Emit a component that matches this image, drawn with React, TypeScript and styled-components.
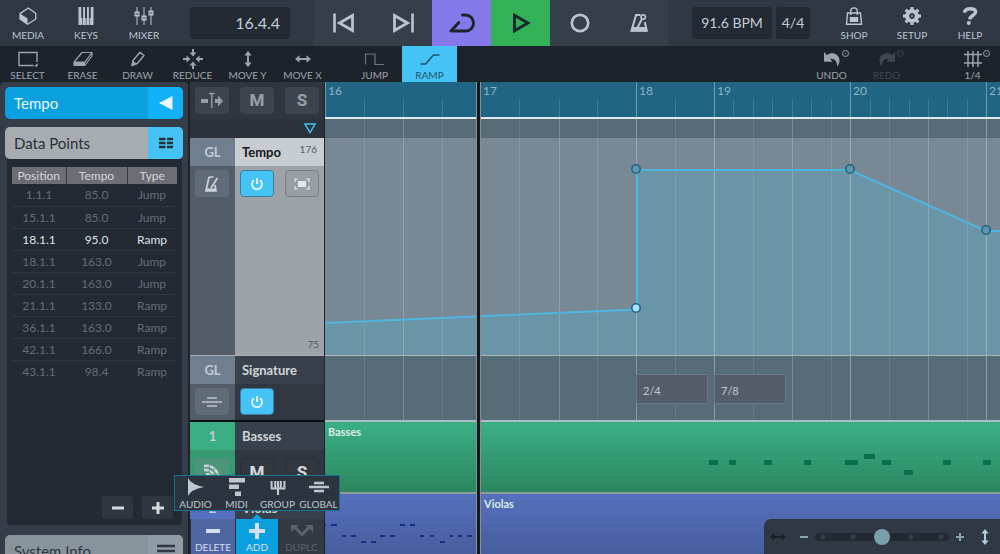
import React, { useState } from "react";
import styled, { createGlobalStyle, css } from "styled-components";

const GlobalStyle = createGlobalStyle`
  *, *::before, *::after { box-sizing: border-box; }
  body { margin: 0; background: #1d232b; font-family: Lato, "Open Sans", sans-serif; }
  button { font: inherit; color: inherit; border: 0; padding: 0; margin: 0; background: none; cursor: pointer; }
  svg { display: block; flex: none; }
`;

/* ---------- shell ---------- */

const Shell = styled.div`
  display: flex;
  flex-direction: column;
  height: 100vh;
  min-width: 1000px;
  overflow: hidden;
  color: #b8c5d0;
`;

const Header = styled.header`
  display: flex;
  flex: none;
  justify-content: space-between;
  height: 46px;
  background: #303843;
`;

const HeaderGroup = styled.div<{ $gap: number }>`
  display: flex;
  align-items: center;
  gap: ${(p) => p.$gap}px;
`;

const ButtonRow = styled.div`
  display: flex;
  align-self: stretch;
`;

const HeaderButton = styled.button`
  display: flex;
  flex-direction: column;
  align-items: center;
  justify-content: space-between;
  width: 58px;
  padding: 7px 2px 5px 0;
  font-size: 10px;
  line-height: 12px;
`;

const Readout = styled.output<{ $width: number; $align?: string }>`
  width: ${(p) => p.$width}px;
  height: 32px;
  padding: 0 ${(p) => (p.$align === "right" ? 10 : 0)}px;
  border-radius: 3px;
  background: #232a33;
  color: #c0ccd6;
  font-size: ${(p) => (p.$align === "right" ? 16 : 14)}px;
  line-height: 31px;
  text-align: ${(p) => p.$align ?? "center"};
`;

const ReadoutPair = styled.div`
  display: flex;
  gap: 4px;
`;

const Transport = styled.div`
  display: flex;
  background: #353f49;
`;

const TransportButton = styled.button<{ $tone?: string }>`
  display: grid;
  place-items: center;
  width: 59px;
  background: ${(p) => p.$tone ?? "transparent"};
  color: ${(p) => (p.$tone ? "#1e242c" : "#b8c5d0")};
`;

/* ---------- tool bar ---------- */

const ToolBar = styled.div`
  display: flex;
  flex: none;
  gap: 17px;
  height: 36px;
  background: #1d232b;
  color: #9da3ab;
`;

const ToolGroup = styled.div<{ $push?: boolean; $gap?: number }>`
  display: flex;
  gap: ${(p) => p.$gap ?? 0}px;
  margin-left: ${(p) => (p.$push ? "auto" : "0")};
`;

const ToolButton = styled.button<{ $on?: boolean }>`
  position: relative;
  display: grid;
  grid-template-rows: 20px 12px;
  place-items: center;
  align-content: start;
  width: 55px;
  padding-top: 3px;
  font-size: 10px;
  line-height: 12px;
  white-space: nowrap;
  ${(p) => p.$on && css`background: #45c3f6; color: #1c536c;`}
  &:disabled { color: #40464e; }
`;

const HistoryDot = styled.span`
  position: absolute;
  top: 4px;
  right: 10px;
  display: grid;
  place-items: center;
  width: 7px;
  height: 7px;
  border: 1px solid currentColor;
  border-radius: 50%;
  &::after { content: ""; width: 1px; height: 1px; background: currentColor; }
`;

/* ---------- body ---------- */

const Body = styled.main`
  display: flex;
  flex: 1;
  min-height: 0;
`;

const Inspector = styled.aside`
  display: flex;
  flex: none;
  flex-direction: column;
  width: 188px;
  padding: 5px 5px 0;
  background: #343d48;
  border-radius: 4px 4px 0 0;
`;

const tones = {
  blue: { base: "#0aa0e0", side: "#10b1f6", text: "#eaf7ff" },
  grey: { base: "#a7acb0", side: "#45c3f6", text: "#2a3038" },
  slate: { base: "#87949c", side: "#8f9ca5", text: "#2f3740" },
};

const SectionButton = styled.button<{ $tone: keyof typeof tones }>`
  display: flex;
  flex: none;
  width: 178px;
  height: 32px;
  overflow: hidden;
  border-radius: 5px;
  background: ${(p) => tones[p.$tone].base};
  color: ${(p) => tones[p.$tone].text};
  font-size: 15px;
  line-height: 32px;
  text-align: left;
`;

const SectionTitle = styled.span`
  flex: 1;
  padding-left: 9px;
`;

const SectionSide = styled.span<{ $tone: keyof typeof tones }>`
  display: grid;
  place-items: center;
  width: 35px;
  background: ${(p) => tones[p.$tone].side};
`;

const Stack = styled.div`
  display: flex;
  flex-direction: column;
  gap: 8px;
`;

const PointPanel = styled.section`
  display: flex;
  flex: 1;
  flex-direction: column;
  justify-content: space-between;
  margin: 0 1px 10px 2px;
  padding: 8px 5px 6px;
  border-radius: 0 0 4px 4px;
  background: #232a33;
`;

const PointTable = styled.table`
  width: 165px;
  border-collapse: collapse;
  table-layout: fixed;
  color: #656c75;
  font-size: 12px;
  line-height: 21px;
  text-align: center;

  th {
    height: 17px;
    padding: 0;
    border-right: 1px solid #343a43;
    background: #6b6f75;
    color: #d2d5d8;
    font-weight: 400;
    line-height: 16px;
  }
  th:last-child { border-right: 0; }
  td { height: 22px; padding: 0; }
  tbody tr + tr { border-top: 1px solid #2f363f; }
`;

const PointRow = styled.tr<{ $active: boolean }>`
  color: ${(p) => (p.$active ? "#dfe3e6" : "inherit")};
`;

const PanelActions = styled.div`
  display: flex;
  justify-content: flex-end;
  gap: 9px;
  padding-right: 4px;
`;

const SquareButton = styled.button`
  display: grid;
  place-items: center;
  width: 31px;
  height: 23px;
  border-radius: 3px;
  background: #303640;
  color: #d5d9dc;
`;

const SystemInfo = styled.div`
  height: 19px;
  overflow: hidden;
`;

/* ---------- track list ---------- */

const TrackColumn = styled.section`
  position: relative;
  display: flex;
  flex: none;
  flex-direction: column;
  width: 134px;
  margin: 0 1px 0 2px;
  background: #2b323b;
`;

const TrackTools = styled.div`
  display: flex;
  flex: none;
  gap: 11px;
  height: 37px;
  padding: 5px;
  background: #303640;
`;

const PadButton = styled.button<{ $tone?: "on" | "light" | "slate" | "clear" }>`
  display: grid;
  flex: none;
  place-items: center;
  width: 34px;
  height: 27px;
  border-radius: 4px;
  background: #3d444e;
  color: #979da5;
  font: 800 17px/27px Roboto, "Liberation Sans", sans-serif;
  ${(p) => p.$tone === "on" && css`background: #45c3f6; color: #e8f8ff; border: 1px solid #3a7fa0;`}
  ${(p) => p.$tone === "light" && css`background: #999ea4; color: #e4e7ea; border: 1px solid #7b8087;`}
  ${(p) => p.$tone === "slate" && css`background: rgba(130, 142, 156, 0.28); color: #ccd2d8;`}
  ${(p) => p.$tone === "clear" && css`background: #30373f; color: #d3d7db; border: 1px solid #29303a;`}
`;

const MarkerRow = styled.div`
  display: flex;
  flex: none;
  justify-content: flex-end;
  height: 19px;
  padding: 4px 8px;
  background: #2b323b;
`;

const Tracks = styled.div`
  flex: 1;
  min-height: 0;
  overflow: hidden;
`;

const TrackItem = styled.article<{ $height: number; $edge: string }>`
  display: grid;
  grid-template: 28px 1fr / 45px 1fr;
  height: ${(p) => p.$height}px;
  border-bottom: ${(p) => p.$edge};
`;

const TrackTag = styled.div<{ $tone: string }>`
  background: ${(p) => p.$tone};
  color: #c3cbd3;
  font-size: 13px;
  font-weight: 700;
  line-height: 28px;
  text-align: center;
`;

const TrackName = styled.div<{ $selected?: boolean }>`
  display: flex;
  justify-content: space-between;
  padding: 0 7px 0 7px;
  background: ${(p) => (p.$selected ? "#c8cdd1" : "#38404b")};
  color: ${(p) => (p.$selected ? "#14181d" : "#d0d5d9")};
  font-size: 13px;
  font-weight: 700;
  line-height: 28px;
`;

const RangeMark = styled.span`
  color: #565b62;
  font-size: 10px;
  font-weight: 400;
  line-height: 22px;
`;

const TrackSide = styled.div<{ $tone: string; $inset?: number }>`
  padding: ${(p) => p.$inset ?? 4}px 5px 0;
  background: ${(p) => p.$tone};
`;

const TrackControls = styled.div<{ $tone: string; $inset?: number }>`
  display: flex;
  flex-direction: column;
  align-items: flex-end;
  justify-content: space-between;
  padding: ${(p) => p.$inset ?? 4}px 5px 0;
  background: ${(p) => p.$tone};
`;

const PadPair = styled.div`
  display: flex;
  gap: 11px;
  width: 79px;
`;

const ActionBar = styled.div`
  position: relative;
  display: grid;
  flex: none;
  grid-template-columns: 45px 43px 1fr;
  height: 35px;
  background: #343a42;
`;

const ActionButton = styled.button<{ $tone?: string }>`
  display: flex;
  flex-direction: column;
  align-items: center;
  justify-content: space-between;
  padding: 4px 0 1px;
  border-left: 1px solid #2a3038;
  background: ${(p) => p.$tone ?? "transparent"};
  color: #d5dff0;
  font-size: 10px;
  line-height: 12px;
  &:disabled { color: #5c636c; }
`;

const AddMenu = styled.div`
  position: absolute;
  z-index: 3;
  bottom: 43px;
  left: -16px;
  display: flex;
  width: 166px;
  height: 36px;
  border: 1px solid #14708f;
  background: #2c353f;
  &::after {
    content: "";
    position: absolute;
    top: 38px;
    left: 77px;
    border: 5px solid transparent;
    border-top: 0;
    border-bottom-color: #0aa0e0;
  }
`;

const AddMenuItem = styled.button`
  display: flex;
  flex: none;
  flex-direction: column;
  align-items: center;
  justify-content: space-between;
  width: 41px;
  padding: 2px 0 0;
  color: #bfc6cd;
  font-size: 10px;
  line-height: 12px;
`;

/* ---------- timeline ---------- */

const Timeline = styled.section`
  position: relative;
  display: flex;
  flex: 1;
  flex-direction: column;
  min-width: 0;
  overflow: hidden;
  background: #566c79;
`;

const Ruler = styled.div`
  position: relative;
  flex: none;
  height: 37px;
  border-bottom: 2px solid #dfe9ee;
  background: #206584;
`;

const BarMark = styled.span<{ $minor: boolean }>`
  position: absolute;
  bottom: 0;
  height: ${(p) => (p.$minor ? "18px" : "100%")};
  padding: 1px 0 0 2px;
  border-left: 1px solid rgba(190, 215, 225, ${(p) => (p.$minor ? 0.2 : 0.5)});
  color: #92b4c3;
  font-size: 12px;
  line-height: 15px;
`;

const Lane = styled.div<{ $height: number; $tone?: string; $edge?: string }>`
  position: relative;
  flex: none;
  height: ${(p) => p.$height}px;
  border-bottom: ${(p) => p.$edge ?? "0"};
  background: ${(p) => p.$tone ?? "transparent"};
`;

const GridLine = styled.i<{ $level: number }>`
  position: absolute;
  top: 0;
  bottom: 0;
  width: 1px;
  background: rgba(200, 220, 228, ${(p) => [0.14, 0.28, 0.42][p.$level]});
`;

const Curve = styled.svg`
  position: absolute;
  inset: 0;
`;

const MeterEvent = styled.button`
  position: absolute;
  top: 18px;
  width: 72px;
  height: 30px;
  padding: 2px 0 0 6px;
  border: 1px solid #6a7783;
  background: #545e6a;
  color: #c3c9ce;
  font-size: 11px;
  text-align: left;
`;

const Clip = styled.div<{ $tone: string }>`
  position: absolute;
  top: 0;
  bottom: 0;
  right: 0;
  padding: 2px 3px;
  background: ${(p) => p.$tone};
  color: #d9f0e8;
  font-size: 11px;
  font-weight: 700;
  line-height: 15px;
`;

const Note = styled.i<{ $tone: string; $tall: number }>`
  position: absolute;
  height: ${(p) => p.$tall}px;
  background: ${(p) => p.$tone};
`;

const Playhead = styled.div`
  position: absolute;
  top: 0;
  bottom: 0;
  left: 151px;
  width: 5px;
  border: solid rgba(215, 220, 222, 0.6);
  border-width: 0 1px;
  background: #161a1f;
`;

const ZoomBar = styled.div`
  position: absolute;
  right: 0;
  bottom: 0;
  display: flex;
  align-items: center;
  gap: 14px;
  width: 236px;
  height: 35px;
  padding: 0 11px 0 6px;
  border-top-left-radius: 7px;
  background: #2f3944;
  color: #86a4b0;
`;

const ZoomRange = styled.div`
  display: flex;
  flex: 1;
  align-items: center;
  gap: 7px;
`;

const ZoomIcon = styled.button<{ $tone?: string }>`
  display: grid;
  place-items: center;
  height: 24px;
  color: ${(p) => p.$tone ?? "inherit"};
`;

const ZoomSlider = styled.input`
  appearance: none;
  width: 134px;
  height: 16px;
  margin: 0;
  background:
    radial-gradient(circle at 8px 8px, #353e49 2px, transparent 3px),
    radial-gradient(circle at 38px 8px, #353e49 2px, transparent 3px),
    radial-gradient(circle at 96px 8px, #353e49 2px, transparent 3px),
    radial-gradient(circle at 126px 8px, #353e49 2px, transparent 3px),
    linear-gradient(#222932, #222932) 4px 4px / 126px 8px no-repeat,
    radial-gradient(circle at 4px 8px, #222932 4px, transparent 4px),
    radial-gradient(circle at 130px 8px, #222932 4px, transparent 4px);
  &::-webkit-slider-thumb {
    appearance: none;
    width: 16px;
    height: 16px;
    border-radius: 50%;
    background: #7ba0aa;
  }
`;

/* ---------- icons ---------- */

type IconProps = { w: number; h: number; children: React.ReactNode };
const Icon = ({ w, h, children }: IconProps) => (
  <svg width={w} height={h} viewBox={`0 0 ${w} ${h}`} fill="currentColor" aria-hidden="true">
    {children}
  </svg>
);
const line = (width: number) => ({ fill: "none", stroke: "currentColor", strokeWidth: width });

const MediaIcon = () => (
  <Icon w={18} h={18}>
    <path d="M9.3 1 16.8 6.6V12L8.5 17.2 1 12V6.6Z" {...line(1.3)} strokeLinejoin="round" />
    <path d="M1 6.6 8.5 11.6V17.2L1 12Z" />
  </Icon>
);
const KeysIcon = () => (
  <Icon w={16} h={18}>
    <path d="M.5 0H3.3V11H4.1V18H.5ZM5.6 0H6.8V11H7.8V18H4.7V11H5.6ZM9.2 0H10.4V11H11.3V18H8.4V11H9.2ZM12.7 0H15.5V18H11.9V11H12.7Z" />
    <path d="M5.2 0H7V18H5.2ZM9 0H10.8V18H9Z" />
  </Icon>
);
const MixerIcon = () => (
  <Icon w={20} h={18}>
    <path d="M3 0V18M10 0V18M17 0V18" {...line(1)} />
    <path d="M.5 4.5H5.5V9.5H.5ZM7.5 8.5H12.5V13.5H7.5ZM14.5 3.5H19.5V8.5H14.5Z" />
    <path d="M1.5 7H4.5M8.5 11H11.5M15.5 6H18.5" fill="none" stroke="#303843" strokeWidth="1" />
  </Icon>
);
const ShopIcon = () => (
  <Icon w={18} h={18}>
    <path d="M2.5 6H15.5L16.5 17.3H1.5Z" {...line(1.4)} />
    <path d="M5.7 8V4.2a3.3 3.3 0 0 1 6.6 0V8" {...line(1.4)} />
    <path d="M4.8 10H13.2V15H4.8Z" />
  </Icon>
);
const SetupIcon = () => (
  <Icon w={20} h={18}>
    <g transform="translate(10 9)">
      {[0, 45, 90, 135, 180, 225, 270, 315].map((a) => (
        <path key={a} d="M-1.9 -5.5 L-1.4 -9H1.4L1.9 -5.5Z" transform={`rotate(${a})`} />
      ))}
      <circle r="4.8" {...line(3.8)} />
      <circle r="1.3" opacity="0.5" />
    </g>
  </Icon>
);
const HelpIcon = () => (
  <Icon w={16} h={18}>
    <path d="M2.3 5.6C3 2.9 5.2 1.8 8.2 1.8c3.4 0 5.4 1.2 5.4 3.3 0 3.2-5.4 3-5.8 7.2" {...line(3.5)} />
    <circle cx="6.8" cy="16" r="2" />
  </Icon>
);

const PrevIcon = () => (
  <Icon w={22} h={20}>
    <path d="M1.5 0.5V19.5" {...line(2.6)} />
    <path d="M19.5 2.5V17.5L6.5 10Z" {...line(2.8)} />
  </Icon>
);
const NextIcon = () => (
  <Icon w={22} h={20}>
    <path d="M20.5 0.5V19.5" {...line(2.6)} />
    <path d="M2.5 2.5V17.5L15.5 10Z" {...line(2.8)} />
  </Icon>
);
const CycleIcon = () => (
  <Icon w={28} h={22}>
    <path d="M14.5 3H17.5a8 8 0 0 1 0 16H3L10.8 10.5" {...line(2.9)} strokeLinecap="round" strokeLinejoin="round" />
  </Icon>
);
const PlayIcon = () => (
  <Icon w={20} h={20}>
    <path d="M3.5 2.2V17.8L17 10Z" {...line(2.8)} />
  </Icon>
);
const RecordIcon = () => (
  <Icon w={20} h={20}>
    <circle cx="10" cy="10" r="8.2" {...line(2.7)} />
  </Icon>
);
const ClickIcon = () => (
  <Icon w={20} h={20}>
    <path d="M11.5 2H7L2.5 17.8H17.8L15.8 9" {...line(2)} />
    <path d="M3 14H17.5V18.5H2Z" />
    <path d="M8.5 14.5 13 6" {...line(2)} />
    <circle cx="14.2" cy="4" r="2.2" {...line(1.7)} />
  </Icon>
);

const SelectIcon = () => (
  <Icon w={20} h={16}>
    <path d="M15.5 14.5H1V1.5H19V11" {...line(1.4)} />
    <path d="M19.7 12V15.5H16Z" />
  </Icon>
);
const EraseIcon = () => (
  <Icon w={20} h={16}>
    <path d="M1 11.2 9 1.5H19L12 11.2ZM1 11.2V14.5H11.8L19 5V1.5" {...line(1.2)} strokeLinejoin="round" />
    <path d="M1 11H12V14.5H1Z" />
  </Icon>
);
const DrawIcon = () => (
  <Icon w={16} h={16}>
    <path d="M2 14.5 3 9.5 10 1.3 14 4.5 7 12.7Z" {...line(1.4)} strokeLinejoin="round" />
    <path d="M1.3 15.3 2.5 9.5 7.2 13Z" />
  </Icon>
);
const ReduceIcon = () => (
  <Icon w={20} h={20}>
    <g transform="translate(10 10)">
      {[0, 90, 180, 270].map((a) => (
        <path key={a} d="M-1-10H1V-6.5H3.5L0-2.5-3.5-6.5H-1Z" transform={`rotate(${a})`} />
      ))}
    </g>
  </Icon>
);
const arrowV = "M4 0 7.7 4.5H5V11.5H7.7L4 16 .3 11.5H3V4.5H.3Z";
const MoveYIcon = () => (
  <Icon w={8} h={16}>
    <path d={arrowV} />
  </Icon>
);
const MoveXIcon = () => (
  <Icon w={16} h={16}>
    <path d={arrowV} transform="translate(16 4) rotate(90)" />
  </Icon>
);
const JumpIcon = () => (
  <Icon w={20} h={16}>
    <path d="M.5 13.5V3H10V13.5H19" {...line(1.2)} opacity="0.65" />
  </Icon>
);
const RampIcon = () => (
  <Icon w={20} h={16}>
    <path d="M.5 13H5.5L13.5 4H19.5" {...line(1.6)} />
  </Icon>
);
const undoPath = "M1 1 4 4.2C8.5.2 16.5 2.8 16.5 9.5 16.5 12 15.5 14 14 15.5 14.5 10 11 7 7 7.8L9.5 10.8H1Z";
const UndoIcon = () => (
  <Icon w={18} h={16}>
    <path d={undoPath} />
  </Icon>
);
const RedoIcon = () => (
  <Icon w={18} h={16}>
    <path d={undoPath} transform="matrix(-1 0 0 1 18 0)" />
  </Icon>
);
const GridIcon = () => (
  <Icon w={18} h={16}>
    <path d="M4 0V16M9 0V16M14 0V16M0 3.5H18M0 12H18" {...line(1.5)} />
  </Icon>
);

const SkipIcon = () => (
  <Icon w={22} h={18}>
    <path d="M0 7H7V11H0ZM14 7H17V3.5L22 9 17 14.5V11H14Z" />
    <path d="M8 1.5H13.5M10.8 1.5V16" {...line(1.4)} />
  </Icon>
);
const MetronomeIcon = () => (
  <Icon w={16} h={18}>
    <path d="M5 2H9.5M5 2 2 16H12L11 10M7 13 13.5 3" {...line(1.7)} />
    <path d="M2.4 13.5H11.6V16H2Z" />
  </Icon>
);
const PowerIcon = () => (
  <Icon w={14} h={14}>
    <path d="M4 3.2a5 5 0 1 0 6 0M7 1V7" {...line(1.8)} />
  </Icon>
);
const FitIcon = () => (
  <Icon w={16} h={14}>
    <path d="M4 4H12V10H4Z" />
    <path d="M1 5V2H4M12 2H15V5M15 9V12H12M4 12H1V9" {...line(1.2)} />
  </Icon>
);
const GlobalIcon = ({ muted }: { muted?: boolean }) => (
  <Icon w={20} h={18}>
    <path d="M5 5H15M0 9H20M5 13H15" {...line(muted ? 2 : 2.5)} opacity={muted ? 0.65 : 1} />
  </Icon>
);
const InstrumentIcon = () => (
  <Icon w={20} h={20}>
    <path d="M2 4Q14 2 18.5 19M2 8Q11 7 14 18M4 12Q9 12 10 17" {...line(2.6)} strokeDasharray="5 0.8" />
  </Icon>
);
const AudioIcon = () => (
  <Icon w={16} h={18}>
    <path d="M0 0Q3 6.5 16 9 3 11.5 0 18Z" />
  </Icon>
);
const MidiIcon = () => (
  <Icon w={16} h={18}>
    <path d="M0 0H16V4.5H0ZM0 6.5H10V11H0ZM6 13.5H12V18H6Z" />
  </Icon>
);
const GroupIcon = () => (
  <Icon w={16} h={18}>
    <path d="M1.6 3V10.5H14.4V3M8 3V17M5.2 3V10M10.8 3V10" {...line(2.1)} />
  </Icon>
);
const MinusIcon = () => (
  <Icon w={14} h={16}>
    <path d="M0 8H14" {...line(4)} />
  </Icon>
);
const PlusIcon = ({ size }: { size: number }) => (
  <Icon w={size} h={size}>
    <path d={`M0 ${size / 2}H${size}M${size / 2} 0V${size}`} {...line(size / 4)} />
  </Icon>
);
const DuplicateIcon = () => (
  <Icon w={22} h={16}>
    <path d="M4 4.5 11 11.5 18 4.5" {...line(3)} />
    <path d="M0 2H8L0 9ZM22 2H14L22 9Z" />
  </Icon>
);
const ListIcon = () => (
  <Icon w={14} h={12}>
    <path d="M0 2H6.5M0 6H6.5M0 10H6.5M8 2H14M8 6H14M8 10H14" {...line(2.4)} />
  </Icon>
);
const MenuIcon = () => (
  <Icon w={18} h={14}>
    <path d="M0 2H18M0 7H18M0 12H18" {...line(2.6)} />
  </Icon>
);
const BackIcon = () => (
  <Icon w={14} h={14}>
    <path d="M13.5 0V14L0 7Z" />
  </Icon>
);
const MarkerIcon = () => (
  <Icon w={12} h={11}>
    <path d="M1 1H11L6 9.5Z" fill="none" stroke="#45c3f6" strokeWidth="1.4" />
  </Icon>
);

/* ---------- data ---------- */

const points: [string, string, string][] = [
  ["1.1.1", "85.0", "Jump"],
  ["15.1.1", "85.0", "Jump"],
  ["18.1.1", "95.0", "Ramp"],
  ["18.1.1", "163.0", "Jump"],
  ["20.1.1", "163.0", "Jump"],
  ["21.1.1", "133.0", "Ramp"],
  ["36.1.1", "163.0", "Ramp"],
  ["42.1.1", "166.0", "Ramp"],
  ["43.1.1", "98.4", "Ramp"],
];

const bars = [
  { x: 0, label: "16" },
  { x: 155, label: "17" },
  { x: 311, label: "18" },
  { x: 389, label: "19" },
  { x: 525, label: "20" },
  { x: 661, label: "21" },
];
const rulerTicks = [39, 78, 117, 194, 234, 272, 350, 408, 428, 447, 467, 486, 506, 545, 564, 584, 603, 622, 642];
const beats: [number, number][] = [
  [39, 0], [78, 1], [117, 0], [194, 0], [234, 1], [272, 0], [311, 2], [350, 0], [389, 2], [428, 0],
  [467, 1], [506, 0], [525, 2], [564, 0], [603, 1], [642, 0], [661, 2],
];
const bassNotes: [number, number, number][] = [
  [384, 38, 9], [404, 38, 7], [439, 38, 8], [479, 38, 7], [520, 38, 13], [539, 32, 11],
  [557, 38, 9], [579, 48, 9], [618, 38, 8], [658, 38, 8],
];
const violaNotes: [number, number, number][] = [
  [0, 30, 1], [6, 30, 6], [17, 41, 4], [26, 41, 5], [36, 47, 5], [46, 47, 5], [55, 41, 5], [65, 41, 5],
  [75, 30, 5], [85, 30, 5], [95, 41, 4], [105, 41, 4], [115, 47, 5], [125, 41, 3], [133, 41, 4], [142, 41, 5],
];
const nodes: [number, number, boolean][] = [
  [311, 31, false], [525, 31, false], [661, 92, false], [311, 170, true],
];

const GridLines = () => (
  <>
    {beats.map(([x, level]) => (
      <GridLine key={x} $level={level} style={{ left: x }} />
    ))}
  </>
);

export default function App() {
  const [zoom, setZoom] = useState(50);

  return (
    <Shell>
      <GlobalStyle />
      <Header>
        <HeaderGroup $gap={16}>
          <ButtonRow>
            <HeaderButton><MediaIcon />MEDIA</HeaderButton>
            <HeaderButton><KeysIcon />KEYS</HeaderButton>
            <HeaderButton><MixerIcon />MIXER</HeaderButton>
          </ButtonRow>
          <Readout $width={100} $align="right" aria-label="Position">16.4.4</Readout>
        </HeaderGroup>
        <Transport>
          <TransportButton aria-label="Previous"><PrevIcon /></TransportButton>
          <TransportButton aria-label="Next"><NextIcon /></TransportButton>
          <TransportButton aria-label="Cycle" $tone="#8578ea"><CycleIcon /></TransportButton>
          <TransportButton aria-label="Play" $tone="#33b156"><PlayIcon /></TransportButton>
          <TransportButton aria-label="Record"><RecordIcon /></TransportButton>
          <TransportButton aria-label="Click"><ClickIcon /></TransportButton>
        </Transport>
        <HeaderGroup $gap={16}>
          <ReadoutPair>
            <Readout $width={80} aria-label="Tempo">91.6 BPM</Readout>
            <Readout $width={34} aria-label="Time signature">4/4</Readout>
          </ReadoutPair>
          <ButtonRow>
            <HeaderButton><ShopIcon />SHOP</HeaderButton>
            <HeaderButton><SetupIcon />SETUP</HeaderButton>
            <HeaderButton><HelpIcon />HELP</HeaderButton>
          </ButtonRow>
        </HeaderGroup>
      </Header>

      <ToolBar>
        <ToolGroup>
          <ToolButton><SelectIcon />SELECT</ToolButton>
          <ToolButton><EraseIcon />ERASE</ToolButton>
          <ToolButton><DrawIcon />DRAW</ToolButton>
          <ToolButton><ReduceIcon />REDUCE</ToolButton>
          <ToolButton><MoveYIcon />MOVE Y</ToolButton>
          <ToolButton><MoveXIcon />MOVE X</ToolButton>
        </ToolGroup>
        <ToolGroup>
          <ToolButton><JumpIcon />JUMP</ToolButton>
          <ToolButton $on><RampIcon />RAMP</ToolButton>
        </ToolGroup>
        <ToolGroup $push $gap={31}>
          <ButtonRow>
            <ToolButton><UndoIcon />UNDO<HistoryDot /></ToolButton>
            <ToolButton disabled><RedoIcon />REDO<HistoryDot /></ToolButton>
          </ButtonRow>
          <ToolButton><GridIcon />1/4<HistoryDot /></ToolButton>
        </ToolGroup>
      </ToolBar>

      <Body>
        <Inspector>
          <Stack>
            <SectionButton $tone="blue">
              <SectionTitle>Tempo</SectionTitle>
              <SectionSide $tone="blue"><BackIcon /></SectionSide>
            </SectionButton>
            <SectionButton $tone="grey">
              <SectionTitle>Data Points</SectionTitle>
              <SectionSide $tone="grey"><ListIcon /></SectionSide>
            </SectionButton>
          </Stack>
          <PointPanel>
            <PointTable>
              <colgroup>
                <col width="54" />
                <col width="61" />
                <col width="50" />
              </colgroup>
              <thead>
                <tr><th>Position</th><th>Tempo</th><th>Type</th></tr>
              </thead>
              <tbody>
                {points.map(([position, tempo, type], i) => (
                  <PointRow key={i} $active={i === 2}>
                    <td>{position}</td><td>{tempo}</td><td>{type}</td>
                  </PointRow>
                ))}
              </tbody>
            </PointTable>
            <PanelActions>
              <SquareButton aria-label="Remove point"><Icon w={12} h={4}><path d="M0 2H12" {...line(3)} /></Icon></SquareButton>
              <SquareButton aria-label="Add point"><PlusIcon size={12} /></SquareButton>
            </PanelActions>
          </PointPanel>
          <SystemInfo>
            <SectionButton $tone="slate">
              <SectionTitle>System Info</SectionTitle>
              <SectionSide $tone="slate"><MenuIcon /></SectionSide>
            </SectionButton>
          </SystemInfo>
        </Inspector>

        <TrackColumn>
          <TrackTools>
            <PadButton aria-label="Follow playhead"><SkipIcon /></PadButton>
            <PadButton>M</PadButton>
            <PadButton>S</PadButton>
          </TrackTools>
          <MarkerRow><MarkerIcon /></MarkerRow>
          <Tracks>
            <TrackItem $height={218} $edge="1px solid #a9b0b5">
              <TrackTag $tone="#707f8f">GL</TrackTag>
              <TrackName $selected>Tempo<RangeMark>176</RangeMark></TrackName>
              <TrackSide $tone="#535d69">
                <PadButton $tone="slate" aria-label="Metronome"><MetronomeIcon /></PadButton>
              </TrackSide>
              <TrackControls $tone="#9da2a8">
                <PadPair>
                  <PadButton $tone="on" aria-label="Power"><PowerIcon /></PadButton>
                  <PadButton $tone="light" aria-label="Fit"><FitIcon /></PadButton>
                </PadPair>
                <RangeMark>75</RangeMark>
              </TrackControls>
            </TrackItem>
            <TrackItem $height={66} $edge="2px solid #0b0e12">
              <TrackTag $tone="#707f8f">GL</TrackTag>
              <TrackName>Signature</TrackName>
              <TrackSide $tone="#535d69">
                <PadButton $tone="slate" aria-label="Global track"><GlobalIcon muted /></PadButton>
              </TrackSide>
              <TrackControls $tone="#303740">
                <PadPair>
                  <PadButton $tone="on" aria-label="Power"><PowerIcon /></PadButton>
                </PadPair>
              </TrackControls>
            </TrackItem>
            <TrackItem $height={72} $edge="1px solid #20262d">
              <TrackTag $tone="#3bae83">1</TrackTag>
              <TrackName>Basses</TrackName>
              <TrackSide $tone="#37996f" $inset={8}>
                <PadButton $tone="slate" aria-label="Instrument"><InstrumentIcon /></PadButton>
              </TrackSide>
              <TrackControls $tone="#303740" $inset={8}>
                <PadPair>
                  <PadButton $tone="clear">M</PadButton>
                  <PadButton $tone="clear">S</PadButton>
                </PadPair>
              </TrackControls>
            </TrackItem>
            <TrackItem $height={72} $edge="0">
              <TrackTag $tone="#566fc0">2</TrackTag>
              <TrackName>Violas</TrackName>
            </TrackItem>
          </Tracks>
          <ActionBar>
            <AddMenu role="menu">
              <AddMenuItem role="menuitem"><AudioIcon />AUDIO</AddMenuItem>
              <AddMenuItem role="menuitem"><MidiIcon />MIDI</AddMenuItem>
              <AddMenuItem role="menuitem"><GroupIcon />GROUP</AddMenuItem>
              <AddMenuItem role="menuitem"><GlobalIcon />GLOBAL</AddMenuItem>
            </AddMenu>
            <ActionButton $tone="#5066a3"><MinusIcon />DELETE</ActionButton>
            <ActionButton $tone="#0aa0e0"><PlusIcon size={16} />ADD</ActionButton>
            <ActionButton disabled><DuplicateIcon />DUPLC</ActionButton>
          </ActionBar>
        </TrackColumn>

        <Timeline>
          <Ruler>
            {bars.map((b) => (
              <BarMark key={b.x} $minor={false} style={{ left: b.x }}>{b.label}</BarMark>
            ))}
            {rulerTicks.map((x) => (
              <BarMark key={x} $minor style={{ left: x }} />
            ))}
          </Ruler>
          <Lane $height={19}><GridLines /></Lane>
          <Lane $height={218} $tone="#788995" $edge="1px solid #a9b8c0">
            <Curve width="100%" height="217" aria-hidden="true">
              <path d="M0 185 312 171.5V32H525L661 93H4000V217H0Z" fill="rgba(92,162,186,0.5)" />
            </Curve>
            <GridLines />
            <Curve width="100%" height="217" aria-label="Tempo curve">
              <path d="M0 185 312 171.5V32H525L661 93H4000" fill="none" stroke="#4fb5e0" strokeWidth="2" />
              {nodes.map(([x, y, filled]) => (
                <circle key={`${x}-${y}`} cx={x} cy={y} r="4.2" fill={filled ? "#a5e4ff" : "#5f97ae"} stroke="#1f6585" strokeWidth="1.6" />
              ))}
            </Curve>
          </Lane>
          <Lane $height={66} $edge="2px solid #adbcc2">
            <GridLines />
            <MeterEvent style={{ left: 311 }}>2/4</MeterEvent>
            <MeterEvent style={{ left: 389 }}>7/8</MeterEvent>
          </Lane>
          <Lane $height={72} $edge="2px solid #8a9d99">
            <Clip $tone="linear-gradient(#3bb085, #2c8660)" style={{ left: 0 }}>Basses</Clip>
            {bassNotes.map(([x, y, w]) => (
              <Note key={x} $tone="#0a6f4c" $tall={5} style={{ left: x, top: y, width: w }} />
            ))}
          </Lane>
          <Lane $height={72}>
            <Clip $tone="linear-gradient(#5670be, #445a95)" style={{ left: 0 }} />
            {violaNotes.map(([x, y, w]) => (
              <Note key={x} $tone="#17318a" $tall={2} style={{ left: x, top: y, width: w }} />
            ))}
            <Clip $tone="linear-gradient(#5670be, #445a95)" style={{ left: 156 }}>Violas</Clip>
          </Lane>
          <Playhead />
          <ZoomBar>
            <ZoomIcon $tone="#1a2027" aria-label="Horizontal zoom"><MoveXIcon /></ZoomIcon>
            <ZoomRange>
              <ZoomIcon aria-label="Zoom out"><Icon w={8} h={8}><path d="M0 4H8" {...line(2)} /></Icon></ZoomIcon>
              <ZoomSlider
                type="range"
                aria-label="Zoom"
                value={zoom}
                onChange={(e) => setZoom(Number(e.target.value))}
              />
              <ZoomIcon aria-label="Zoom in"><PlusIcon size={8} /></ZoomIcon>
            </ZoomRange>
            <ZoomIcon $tone="#b0cbdc" aria-label="Vertical zoom"><MoveYIcon /></ZoomIcon>
          </ZoomBar>
        </Timeline>
      </Body>
    </Shell>
  );
}
